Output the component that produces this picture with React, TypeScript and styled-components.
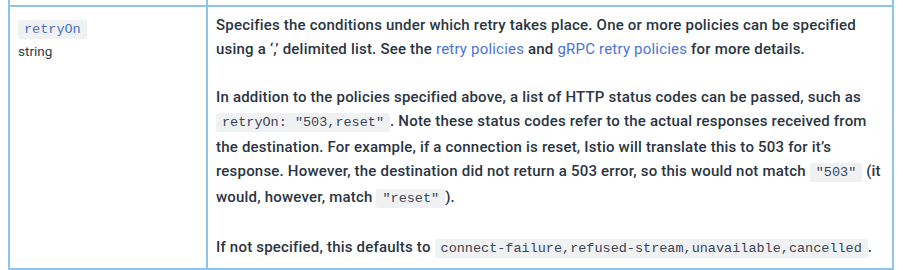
import styled, { createGlobalStyle } from "styled-components";

const GlobalStyle = createGlobalStyle`
  html, body {
    margin: 0;
    padding: 0;
    background: #ffffff;
  }
  body {
    font-family: Roboto, "Noto Sans", sans-serif;
    color: #2b3543;
  }
`;

const Page = styled.div`
  padding: 0 9px 0 8px;
  height: 270px;
  overflow: hidden;
`;

const Table = styled.table`
  width: 886px;
  border-collapse: collapse;
  table-layout: fixed;
`;

const Cell = styled.td<{ $w?: number }>`
  border: 2px solid #8cc4ee;
  vertical-align: top;
  width: ${(p) => (p.$w ? `${p.$w}px` : "auto")};
  padding: 6px 8px 7px 8px;
`;

const HeadCell = styled(Cell)`
  border-top: none;
  height: 5px;
  padding: 0;
`;

const Field = styled.div`
  line-height: 24px;
  padding-top: 3px;
`;

const Code = styled.code<{ $field?: boolean }>`
  font-family: "Liberation Mono", "DejaVu Sans Mono", monospace;
  font-size: 13.5px;
  letter-spacing: 0;
  background: #f0f1f3;
  color: ${(p) => (p.$field ? "#4b70c6" : "#3a4556")};
  padding: 2px 6px;
  border-radius: 2px;
`;

const Type = styled.div`
  font-size: 13.5px;
  line-height: 18px;
  color: #333c48;
`;

const Para = styled.p`
  margin: 0 0 24px 0;
  font-size: 15px;
  line-height: 24px;
  font-weight: 500;
  letter-spacing: 0.2px;
  &:last-child {
    margin-bottom: 0;
  }
`;

const Link = styled.a`
  color: #4a73d6;
  font-weight: 400;
  text-decoration: none;
`;

export default function App() {
  return (
    <Page>
      <GlobalStyle />
      <Table>
        <tbody>
          <tr>
            <HeadCell $w={196}></HeadCell>
            <HeadCell></HeadCell>
          </tr>
          <tr>
            <Cell $w={196}>
              <Field>
                <Code $field>retryOn</Code>
              </Field>
              <Type>string</Type>
            </Cell>
            <Cell>
              <Para>
                Specifies the conditions under which retry takes place. One or
                more policies can be specified using a ‘,’ delimited list. See
                the <Link href="#">retry policies</Link> and{" "}
                <Link href="#">gRPC retry policies</Link> for more details.
              </Para>
              <Para>
                In addition to the policies specified above, a list of HTTP
                status codes can be passed, such as{" "}
                <Code>retryOn: "503,reset"</Code>. Note these status codes refer
                to the actual responses received from the destination. For
                example, if a connection is reset, Istio will translate this to
                503 for it’s response. However, the destination did not return
                a 503 error, so this would not match <Code>"503"</Code> (it
                would, however, match <Code>"reset"</Code>).
              </Para>
              <Para>
                If not specified, this defaults to{" "}
                <Code>connect-failure,refused-stream,unavailable,cancelled</Code>.
              </Para>
            </Cell>
          </tr>
        </tbody>
      </Table>
    </Page>
  );
}
